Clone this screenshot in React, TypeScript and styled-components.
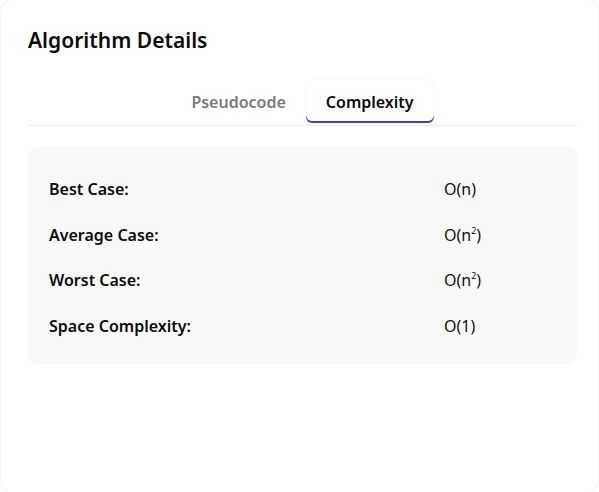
import React from "react";
import styled, { createGlobalStyle } from "styled-components";

const Global = createGlobalStyle`
  html, body { margin: 0; padding: 0; background: #ffffff; }
  body { font-family: "Noto Sans", "Open Sans", sans-serif; color: #111; }
  * { box-sizing: border-box; }
`;

const Card = styled.div`
  margin: 0 1px;
  height: 492px;
  background: #fff;
  border-radius: 12px;
  box-shadow: 0 0 2px rgba(0, 0, 0, 0.12);
  padding: 24px 21px 24px 27px;
  display: flex;
  flex-direction: column;
`;

const Title = styled.h2`
  margin: 0;
  font-size: 21px;
  font-weight: 600;
  line-height: 32px;
  color: #0b0b0b;
`;

const TabBar = styled.div`
  margin-top: 24px;
  display: flex;
  justify-content: center;
  border-bottom: 1px solid #eeeeee;
  padding-bottom: 2px;
`;

const Tab = styled.button<{ $active?: boolean }>`
  border: none;
  font-family: inherit;
  font-size: 16px;
  font-weight: 600;
  padding: 0 20px;
  height: 43px;
  cursor: pointer;
  background: ${(p) => (p.$active ? "#fff" : "transparent")};
  color: ${(p) => (p.$active ? "#0b0b0b" : "#7a7a7a")};
  border-radius: 6px;
  box-shadow: ${(p) =>
    p.$active ? "0 0 2px rgba(0,0,0,0.08), inset 0 -2px 0 #3b4aa8" : "none"};
`;

const Panel = styled.div`
  margin-top: 20px;
  background: #f9f9f9;
  border-radius: 10px;
  padding: 21px 21px 15px 21px;
  display: grid;
  grid-template-columns: 1fr 112px;
`;

const Label = styled.div`
  font-size: 16px;
  font-weight: 600;
  line-height: 45.5px;
  color: #0b0b0b;
`;

const Value = styled.div`
  font-size: 16px;
  line-height: 45.5px;
  color: #111;
  sup {
    font-size: 9px;
    line-height: 0;
    vertical-align: 7px;
  }
`;

const rows: [string, React.ReactNode][] = [
  ["Best Case:", "O(n)"],
  ["Average Case:", <>O(n<sup>2</sup>)</>],
  ["Worst Case:", <>O(n<sup>2</sup>)</>],
  ["Space Complexity:", "O(1)"],
];

export default function App() {
  return (
    <>
      <Global />
      <Card>
        <Title>Algorithm Details</Title>
        <TabBar>
          <Tab>Pseudocode</Tab>
          <Tab $active>Complexity</Tab>
        </TabBar>
        <Panel>
          {rows.map(([l, v], i) => (
            <React.Fragment key={i}>
              <Label>{l}</Label>
              <Value>{v}</Value>
            </React.Fragment>
          ))}
        </Panel>
      </Card>
    </>
  );
}
